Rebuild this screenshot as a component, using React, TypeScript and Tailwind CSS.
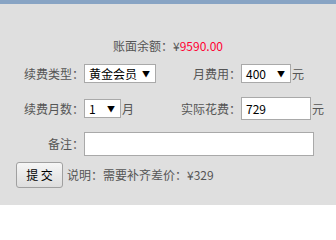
import React from "react";

const FakeSelect = ({ value, width }: { value: string; width: string }) => (
  <div
    className={`${width} flex h-[19px] items-center justify-between border border-[#a9a9a9] bg-white pl-[4px] pr-[5px] text-black`}
  >
    <span>{value}</span>
    <span className="text-[8px] leading-none">▼</span>
  </div>
);

export default function App() {
  return (
    <div
      className="h-[205px] w-[336px] bg-[#dfdfdf] text-[12px] leading-[16px] text-[#555]"
      style={{ fontFamily: '"Noto Sans CJK SC", "Liberation Sans", sans-serif' }}
    >
      <div className="h-[4px] bg-[#88a4c4]" />

      <div className="mt-[32px] flex h-[20px] items-center">
        <span className="w-[173px] text-right">账面余额：</span>
        <span>¥</span>
        <span className="text-[#ff0033]">9590.00</span>
      </div>

      <div className="mt-[8px] grid grid-cols-[84px_97px_60px_1fr] items-center">
        <span className="text-right">续费类型：</span>
        <div className="flex">
          <FakeSelect value="黄金会员" width="w-[72px]" />
        </div>
        <span className="text-right">月费用：</span>
        <div className="flex items-center">
          <FakeSelect value="400" width="w-[50px]" />
          <span className="ml-[1px]">元</span>
        </div>
      </div>

      <div className="mt-[14px] grid h-[23px] grid-cols-[84px_97px_60px_1fr] items-center">
        <span className="text-right">续费月数：</span>
        <div className="flex items-center">
          <FakeSelect value="1" width="w-[37px]" />
          <span className="ml-[1px]">月</span>
        </div>
        <span className="text-right">实际花费：</span>
        <div className="flex items-center">
          <div className="flex h-[23px] w-[70px] items-center border border-[#a9a9a9] bg-white pl-[4px] text-black">
            729
          </div>
          <span className="ml-[1px]">元</span>
        </div>
      </div>

      <div className="mt-[12px] flex h-[24px] items-center">
        <span className="w-[84px] text-right">备注：</span>
        <div className="h-[24px] w-[230px] border border-[#a9a9a9] bg-white" />
      </div>

      <div className="mt-[6px] flex h-[26px] items-center">
        <button className="ml-[16px] h-[26px] w-[47px] rounded-[3px] border border-[#a0a0a0] bg-gradient-to-b from-[#f6f6f6] to-[#dddddd] text-black">
          提 交
        </button>
        <span className="ml-[4px]">说明：需要补齐差价：¥329</span>
      </div>
    </div>
  );
}
